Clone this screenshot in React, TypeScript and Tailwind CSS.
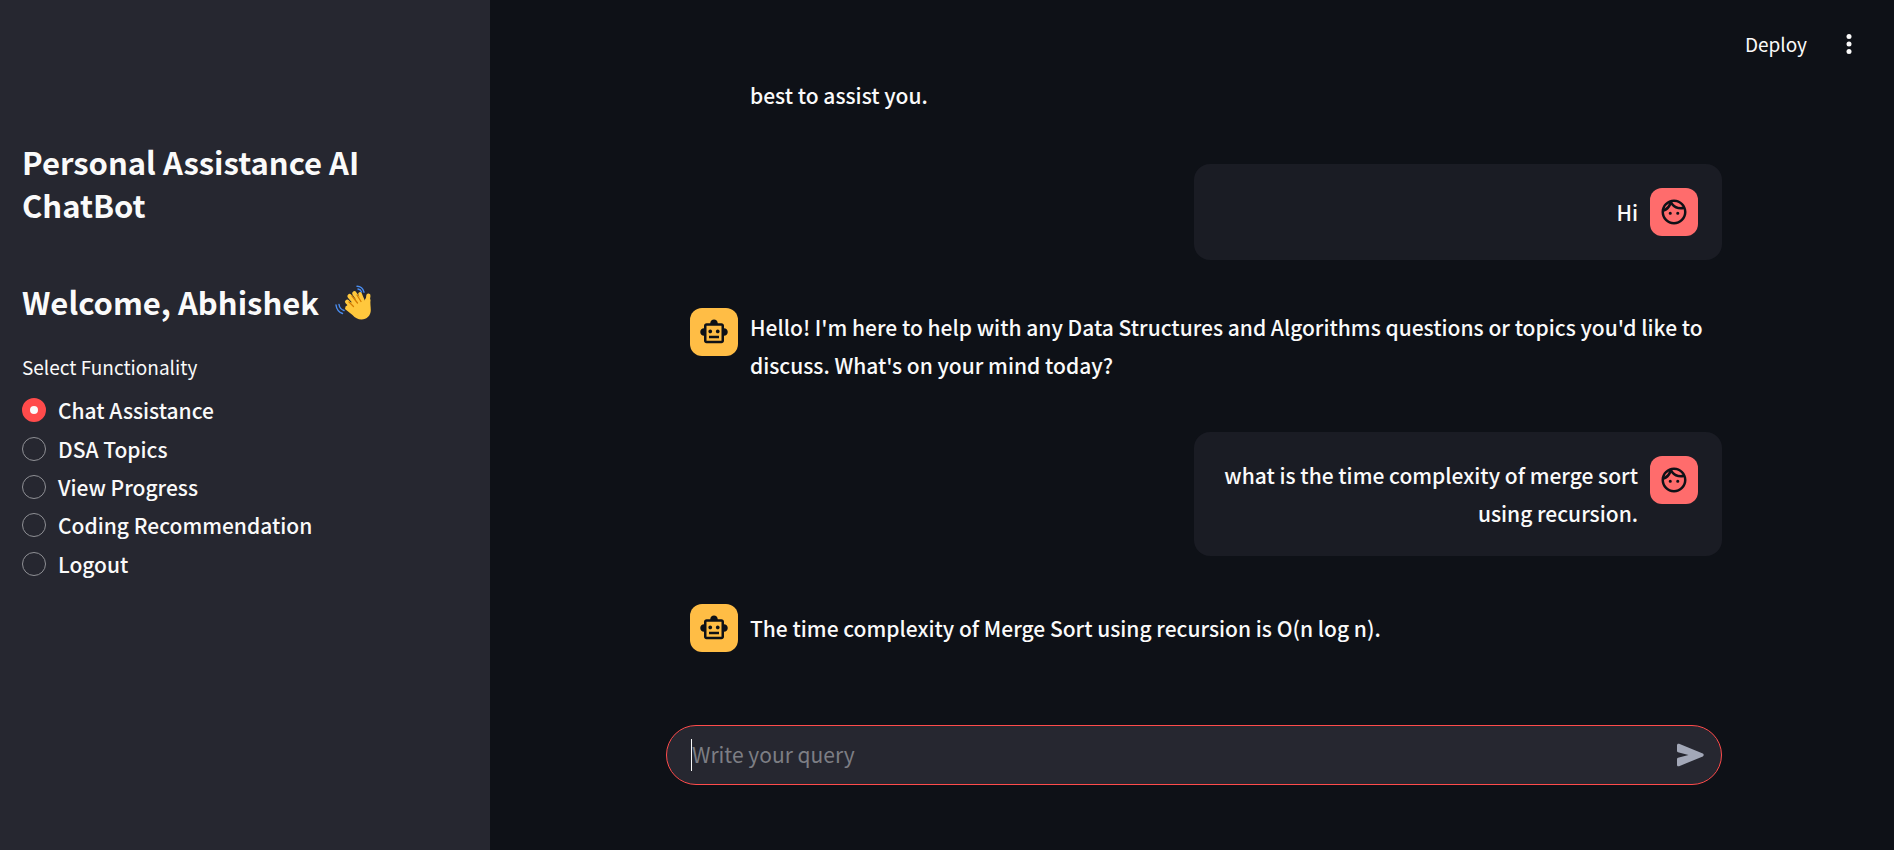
import { useState } from "react";
import type { ReactNode } from "react";
import { MdOutlineFace, MdOutlineSmartToy } from "react-icons/md";

const OPTIONS = ["Chat Assistance", "DSA Topics", "View Progress", "Coding Recommendation", "Logout"];

function WavingHand() {
  return (
    <svg viewBox="0 0 36 36" className="size-9 shrink-0" role="img" aria-label="waving hand">
      <g fill="none" stroke="#ffc83d" strokeLinecap="round" strokeWidth="4.4">
        <path d="M12.2 17.8 20 26" />
        <path d="M14.6 12.2 23 22" />
        <path d="M19.4 9.4 26 19" />
        <path d="M25 9.8 28 17" strokeWidth="3.6" />
        <path d="M33.4 11.6 32 22" strokeWidth="4.2" />
      </g>
      <path fill="#ffc83d" d="M10.5 22.5 24 13l5 4 2-3 4.6 1.5c-.6 4 .2 7 .2 10.500 0 5.500-4 9.500-9.300 9.500-3.500 0-6.500-1.700-9-4.500L10 25z" />
      <g fill="none" stroke="#d67d00" strokeLinecap="round" strokeWidth="1.3">
        <path d="m14 18 4.500 4.500" />
        <path d="m17 12 5.500 7" />
        <path d="m22 11 4 6.500" />
      </g>
      <g fill="none" stroke="#4a8df0" strokeLinecap="round" strokeWidth="1.4">
        <path d="M22 2.200c3.500 0 6 2 7 6" />
        <path d="M23 5c2 .300 3 1.500 3.600 3" />
        <path d="M1 21c.500 4 2.500 7 6.500 8.500" />
        <path d="M4 20.500c.500 3 2 5 5 6" />
      </g>
    </svg>
  );
}

function Message({ role, children }: { role: "user" | "assistant"; children: ReactNode }) {
  const isUser = role === "user";
  return (
    <article
      className={
        isUser
          ? "ml-auto flex w-1/2 flex-row-reverse items-start gap-3 rounded-2xl bg-[#1a1c24] p-6 text-right"
          : "flex items-start gap-3 py-6 pr-4 pl-6"
      }
    >
      <div
        className={
          isUser
            ? "flex size-12 shrink-0 items-center justify-center rounded-xl bg-[#ff6c6c] text-[#0e1117]"
            : "flex size-12 shrink-0 items-center justify-center rounded-xl bg-[#ffbd45] text-[#0e1117]"
        }
      >
        {isUser ? <MdOutlineFace className="size-[30px]" /> : <MdOutlineSmartToy className="size-[30px]" />}
      </div>
      <div className="flex min-h-12 flex-1 flex-col justify-center">
        <p>{children}</p>
      </div>
    </article>
  );
}

export default function App() {
  const [selected, setSelected] = useState(OPTIONS[0]);
  return (
    <div className="flex min-h-screen bg-[#0e1117] font-['Noto_Sans_CJK_SC',sans-serif] text-[21px] leading-[38px] font-medium text-[#fafafa]">
      <aside className="w-[490px] shrink-0 bg-[#262730] px-[22px] pt-[140px]">
        <h1 className="text-[31px] leading-[43px] font-semibold">Personal Assistance AI ChatBot</h1>
        <h2 className="mt-[54px] flex items-center gap-4 text-[31px] leading-[43px] font-semibold">
          Welcome, Abhishek
          <WavingHand />
        </h2>
        <fieldset className="mt-7">
          <legend className="text-[19px] leading-[32px] font-normal">Select Functionality</legend>
          <div className="mt-2 grid h-48 auto-rows-fr">
            {OPTIONS.map((option) => (
              <label key={option} className="flex items-center gap-3">
                <input
                  type="radio"
                  name="functionality"
                  checked={selected === option}
                  onChange={() => setSelected(option)}
                  className="size-6 appearance-none rounded-full border border-[#8f9095] checked:border-8 checked:border-[#ff4b4b] checked:bg-[#fafafa]"
                />
                {option}
              </label>
            ))}
          </div>
        </fieldset>
      </aside>

      <main className="flex min-w-0 flex-1 flex-col pl-1">
        <header className="flex h-[76px] shrink-0 items-center justify-end gap-7 pt-3 pr-[31px] text-[19px] font-normal">
          <button type="button">Deploy</button>
          <button type="button" aria-label="Main menu">
            <svg viewBox="0 0 28 28" className="size-7" fill="currentColor">
              <circle cx="14" cy="6.500" r="2.500" />
              <circle cx="14" cy="14" r="2.500" />
              <circle cx="14" cy="21.500" r="2.500" />
            </svg>
          </button>
        </header>

        <div className="mx-auto flex w-full max-w-[1056px] flex-1 flex-col">
          <section className="flex flex-col gap-6">
            <p className="mb-[26px] pl-[84px]">best to assist you.</p>
            <Message role="user">Hi</Message>
            <Message role="assistant">
              Hello! I'm here to help with any Data Structures and Algorithms questions or topics you'd like to discuss.
              What's on your mind today?
            </Message>
            <Message role="user">what is the time complexity of merge sort using recursion.</Message>
            <Message role="assistant">The time complexity of Merge Sort using recursion is O(n log n).</Message>
          </section>

          <form
            className="mt-auto mb-[65px] flex h-[60px] items-center rounded-full border border-[#ff4b4b] bg-[#262730] pr-4 pl-6"
            onSubmit={(event) => event.preventDefault()}
          >
            <span className="h-8 w-px bg-[#fafafa]" />
            <input
              type="text"
              aria-label="Write your query"
              placeholder="Write your query"
              className="min-w-0 flex-1 bg-transparent pb-0.5 font-normal outline-none placeholder:text-[#7d7e84]"
            />
            <button type="submit" aria-label="Send" className="text-[#a3a8b8]">
              <svg viewBox="0 0 30 30" className="size-[30px]" fill="currentColor">
                <path d="M2 5.200C2 4 3 3.300 4.100 3.800L27.800 13.600c1.200.500 1.200 2.300 0 2.800L4.100 26.200C3 26.700 2 26 2 24.800V19q0-1 1-1.300L13.500 15 3 12.300Q2 12 2 11z" />
              </svg>
            </button>
          </form>
        </div>
      </main>
    </div>
  );
}
